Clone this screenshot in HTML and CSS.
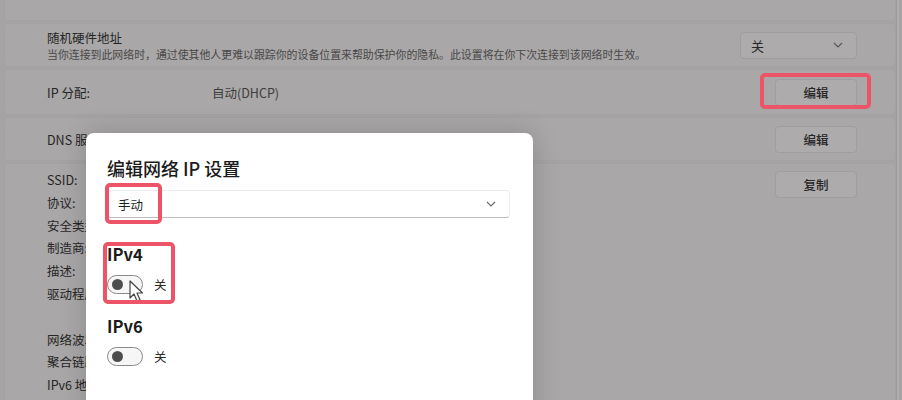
FILE: index.html
```html
<!DOCTYPE html>
<html>
<head>
    <meta charset="UTF-8"/>
    <title>编辑网络 IP 设置</title>
    <link rel="stylesheet" href="styles.css">
</head>
<body>
<div class="page">
    <!-- Settings list (dimmed behind the dialog) -->
    <div class="list">
        <div class="card card-top"></div>
        <div class="card row row-mac">
            <div class="row-text">
                <div class="row-title">随机硬件地址</div>
                <div class="row-sub">当你连接到此网络时，通过使其他人更难以跟踪你的设备位置来帮助保护你的隐私。此设置将在你下次连接到该网络时生效。</div>
            </div>
            <div class="select">
                <span>关</span>
                <svg width="10" height="6" viewBox="0 0 10 6"><path d="M1 1l4 4 4-4" fill="none" stroke="#555" stroke-width="1.1"/></svg>
            </div>
        </div>
        <div class="card row">
            <div class="row-label">IP 分配:</div>
            <div class="row-value">自动(DHCP)</div>
            <div class="btn">编辑</div>
        </div>
        <div class="card row row-dns">
            <div class="row-label">DNS 服务器分配:</div>
            <div class="row-value">自动(DHCP)</div>
            <div class="btn">编辑</div>
        </div>
        <div class="card row row-props">
            <div class="props">
                <div>SSID:</div>
                <div>协议:</div>
                <div>安全类型:</div>
                <div>制造商:</div>
                <div>描述:</div>
                <div>驱动程序版本:</div>
                <div>&nbsp;</div>
                <div>网络波段:</div>
                <div>聚合链路速度:</div>
                <div>IPv6 地址:</div>
            </div>
            <div class="btn">复制</div>
        </div>
    </div>
    <div class="scroll-edge"></div>

    <!-- Dialog -->
    <div class="dialog">
        <div class="dialog-title">编辑网络 IP 设置</div>
        <div class="dialog-select">
            <span>手动</span>
            <svg width="10" height="6" viewBox="0 0 10 6"><path d="M1 1l4 4 4-4" fill="none" stroke="#666" stroke-width="1.1"/></svg>
        </div>
        <div class="ip-block ip-v4">
            <div class="ip-title">IPv4</div>
            <div class="toggle-line">
                <span class="toggle"><span class="knob"></span></span>
                <span class="toggle-text">关</span>
            </div>
        </div>
        <div class="ip-block ip-v6">
            <div class="ip-title">IPv6</div>
            <div class="toggle-line">
                <span class="toggle"><span class="knob"></span></span>
                <span class="toggle-text">关</span>
            </div>
        </div>
    </div>

    <!-- Mouse pointer -->
    <svg class="cursor" width="14" height="22" viewBox="0 0 14 22">
        <path d="M1 1v17l4-4 3 7 3-1.3-3-6.7h5.5z" fill="#fff" stroke="#444" stroke-width="1.2" stroke-linejoin="round"/>
    </svg>

    <!-- Red annotation boxes -->
    <div class="mark mark-edit"></div>
    <div class="mark mark-manual"></div>
    <div class="mark mark-ipv4"></div>
</div>
</body>
</html>
```

FILE: styles.css
```css
body {
margin: 0;
background-color: #a5a3a3;
font-family: "Noto Sans CJK SC", "Noto Sans", sans-serif;
color: #262626;
}
.page {
position: relative;
width: 902px;
height: 400px;
overflow: hidden;
}
.list {
display: flex;
flex-direction: column;
gap: 2px;
padding: 0 6px 0 4px;
}
.card {
background-color: #a9a7a7;
border: 1px solid #a4a2a2;
border-radius: 4px;
box-sizing: border-box;
}
.card-top {
height: 21px;
border-top: none;
border-radius: 0 0 4px 4px;
}
.row {
display: flex;
align-items: center;
padding: 0 35px 0 42px;
height: 46px;
}
.row-mac {
height: 44px;
}
.row-text {
flex: 1;
}
.row-title {
font-size: 12.5px;
line-height: 17px;
}
.row-sub {
font-size: 10.9px;
line-height: 16px;
color: #4a4848;
}
.select {
display: flex;
align-items: center;
justify-content: space-between;
width: 117px;
height: 27px;
box-sizing: border-box;
padding: 0 13px 0 10px;
margin-right: 3px;
background-color: #adabab;
border: 1px solid #9f9d9d;
border-radius: 4px;
font-size: 13px;
}
.row-label {
width: 165px;
font-size: 12.5px;
}
.row-value {
flex: 1;
font-size: 12.5px;
color: #3e3c3c;
}
.btn {
width: 82px;
height: 27px;
box-sizing: border-box;
display: flex;
align-items: center;
justify-content: center;
background-color: #adabab;
border: 1px solid #9f9d9d;
border-radius: 4px;
font-size: 12.5px;
font-weight: 500;
margin-right: 3px;
}
.row-dns {
height: 44px;
}
.row-props {
height: 250px;
align-items: flex-start;
padding-top: 5px;
}
.row-props .btn {
margin-top: 2px;
}
.props {
flex: 1;
font-size: 12.5px;
line-height: 22.8px;
}
.scroll-edge {
position: absolute;
top: 0;
right: 3px;
width: 2px;
height: 400px;
background-color: #b0aeae;
border-left: 1px solid #9c9898;
}

/* Dialog */
.dialog {
position: absolute;
left: 86px;
top: 133px;
width: 447px;
height: 290px;
box-sizing: border-box;
padding: 23px 23px 0 20px;
background-color: #fff;
border-radius: 8px;
box-shadow: 0 0 28px rgba(0, 0, 0, 0.18);
}
.dialog-title {
font-size: 18px;
line-height: 24px;
font-weight: 500;
color: #1b1b1b;
padding-left: 1px;
}
.dialog-select {
display: flex;
align-items: center;
justify-content: space-between;
margin-top: 10px;
height: 28px;
box-sizing: border-box;
padding: 0 13px 0 11px;
border: 1px solid #ececec;
border-bottom-color: #bdbdbd;
border-radius: 4px;
font-size: 12.5px;
color: #1f1f1f;
}
.ip-block {
padding-left: 1px;
}
.ip-v4 {
margin-top: 25px;
}
.ip-v6 {
margin-top: 21px;
}
.ip-title {
font-size: 16.5px;
line-height: 22px;
font-weight: 600;
color: #1b1b1b;
}
.toggle-line {
display: flex;
align-items: center;
gap: 11px;
margin-top: 10px;
}
.toggle {
display: flex;
align-items: center;
width: 36px;
height: 19px;
box-sizing: border-box;
padding-left: 4px;
border: 1px solid #8a8a8a;
border-radius: 10px;
background-color: #f6f6f6;
}
.knob {
width: 11px;
height: 11px;
border-radius: 50%;
background-color: #4d4d4d;
}
.toggle-text {
font-size: 12.5px;
color: #2a2a2a;
}
.cursor {
position: absolute;
left: 129px;
top: 280px;
}

/* Annotation boxes */
.mark {
position: absolute;
border: 4px solid #ee5467;
border-radius: 5px;
box-sizing: border-box;
}
.mark-edit {
left: 760px;
top: 73px;
width: 111px;
height: 36px;
}
.mark-manual {
left: 105px;
top: 183px;
width: 57px;
height: 41px;
}
.mark-ipv4 {
left: 103px;
top: 242px;
width: 72px;
height: 62px;
}
```
